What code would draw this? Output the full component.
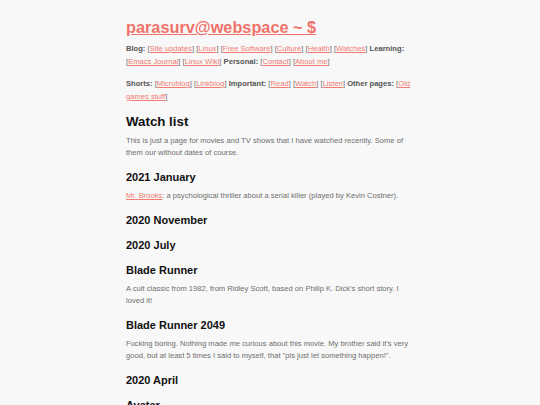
import React from "react";

type NavItem = { label: string } | { link: string };

const NAV_1: NavItem[] = [
  { label: "Blog:" },
  { link: "Site updates" },
  { link: "Linux" },
  { link: "Free Software" },
  { link: "Culture" },
  { link: "Health" },
  { link: "Watches" },
  { label: "Learning:" },
  { link: "Emacs Journal" },
  { link: "Linux Wiki" },
  { label: "Personal:" },
  { link: "Contact" },
  { link: "About me" },
];

const NAV_2: NavItem[] = [
  { label: "Shorts:" },
  { link: "Microblog" },
  { link: "Linkblog" },
  { label: "Important:" },
  { link: "Read" },
  { link: "Watch" },
  { link: "Listen" },
  { label: "Other pages:" },
  { link: "Old games stuff" },
];

function Nav({ items }: { items: NavItem[] }) {
  return (
    <p className="text-[7.6px] leading-[12.5px] text-[#6e6e6e]">
      {items.map((it, i) => (
        <React.Fragment key={i}>
          {i > 0 && " "}
          {"label" in it ? (
            <b className="font-bold text-[#555]">{it.label}</b>
          ) : (
            <>
              [<a href="#" className="text-[#f17b73] underline">{it.link}</a>]
            </>
          )}
        </React.Fragment>
      ))}
    </p>
  );
}

function H3({ children }: { children: React.ReactNode }) {
  return (
    <h3 className="text-[11px] leading-[14.5px] font-bold text-[#111] mt-[10.5px] mb-[6px]">
      {children}
    </h3>
  );
}

function P({ children }: { children: React.ReactNode }) {
  return <p className="text-[7.6px] leading-[12px] text-[#6e6e6e]">{children}</p>;
}

export default function App() {
  return (
    <div
      className="min-h-screen bg-[#f8f8f8] overflow-hidden"
      style={{ fontFamily: '"Liberation Sans", Arial, sans-serif' }}
    >
      <main className="w-[288px] mx-auto pt-[15px]">
        <h1 className="text-[16.3px] leading-[24px] font-bold mb-[4px]">
          <a href="#" className="text-[#f0736b] underline">parasurv@webspace ~ $</a>
        </h1>
        <Nav items={NAV_1} />
        <div className="h-[10px]" />
        <Nav items={NAV_2} />
        <h2 className="text-[13.3px] leading-[18px] font-bold text-[#111] mt-[10px] mb-[4px]">Watch list</h2>
        <P>
          This is just a page for movies and TV shows that I have watched recently. Some of them our
          without dates of course.
        </P>
        <H3>2021 January</H3>
        <P>
          <a href="#" className="text-[#f17b73] underline">Mr. Brooks</a>: a psychological thriller
          about a serial killer (played by Kevin Costner).
        </P>
        <H3>2020 November</H3>
        <H3>2020 July</H3>
        <H3>Blade Runner</H3>
        <P>
          A cult classic from 1982, from Ridley Scott, based on Philip K. Dick's short story. I loved
          it!
        </P>
        <H3>Blade Runner 2049</H3>
        <P>
          Fucking boring. Nothing made me curious about this movie. My brother said it's very good,
          but at least 5 times I said to myself, that "pls just let something happen!".
        </P>
        <H3>2020 April</H3>
        <H3>Avatar</H3>
      </main>
    </div>
  );
}
